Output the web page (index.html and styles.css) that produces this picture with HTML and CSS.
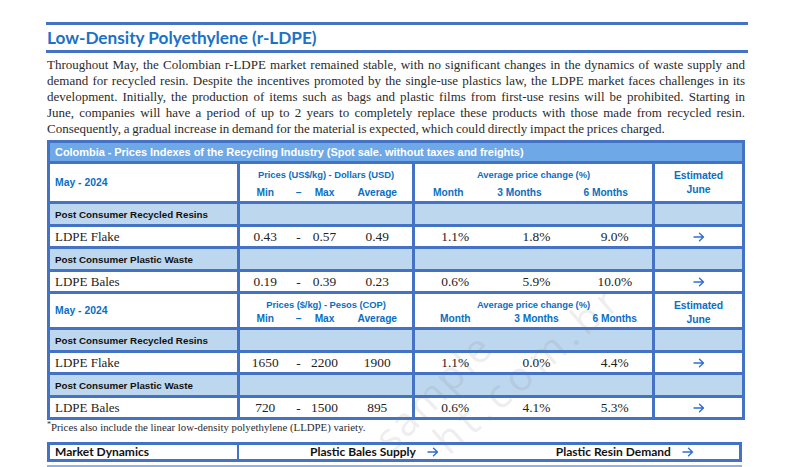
FILE: index.html
```html
<!DOCTYPE html>
<html>
<head>
<meta charset="utf-8">
<link rel="stylesheet" href="styles.css">
</head>
<body>
<div class="page">
  <h1 class="title">Low-Density Polyethylene (r-LDPE)</h1>
  <p class="intro">
    <span class="ln">Throughout May, the Colombian r-LDPE market remained stable, with no significant changes in the dynamics of waste supply and</span>
    <span class="ln">demand for recycled resin. Despite the incentives promoted by the single-use plastics law, the LDPE market faces challenges in its</span>
    <span class="ln">development. Initially, the production of items such as bags and plastic films from first-use resins will be prohibited. Starting in</span>
    <span class="ln">June, companies will have a period of up to 2 years to completely replace these products with those made from recycled resin.</span>
    <span class="ln last">Consequently, a gradual increase in demand for the material is expected, which could directly impact the prices charged.</span>
  </p>

  <table class="prices">
    <colgroup>
      <col class="c-label">
      <col class="c-min">
      <col class="c-dash">
      <col class="c-max">
      <col class="c-avg">
      <col class="c-month">
      <col class="c-3m">
      <col class="c-6m">
      <col class="c-est">
    </colgroup>
    <tr class="caption-row">
      <td colspan="9">Colombia - Prices Indexes of the Recycling Industry (Spot sale. without taxes and freights)</td>
    </tr>

    <tr class="head-top rule tall">
      <td class="period" rowspan="2">May - 2024</td>
      <td class="g hd" colspan="4">Prices (US$/kg) - Dollars (USD)</td>
      <td class="g hd" colspan="3">Average price change (%)</td>
      <td class="g hd est" rowspan="2">Estimated<br>June</td>
    </tr>
    <tr class="head-sub tall">
      <td class="g hd">Min</td><td class="hd">–</td><td class="hd">Max</td><td class="hd">Average</td>
      <td class="g hd sh1">Month</td><td class="hd sh3">3 Months</td><td class="hd sh6">6 Months</td>
    </tr>
    <tr class="cat rule">
      <td>Post Consumer Recycled Resins</td><td class="g" colspan="4"></td><td class="g" colspan="3"></td><td class="g"></td>
    </tr>
    <tr class="data rule">
      <td class="name">LDPE Flake</td>
      <td class="g">0.43</td><td>-</td><td>0.57</td><td>0.49</td>
      <td class="g">1.1%</td><td>1.8%</td><td>9.0%</td>
      <td class="g"><svg class="arrow" viewBox="0 0 12 10" width="12" height="10"><path d="M1 5H10.5M6.5 1.2L10.5 5L6.5 8.8"/></svg></td>
    </tr>
    <tr class="cat rule">
      <td>Post Consumer Plastic Waste</td><td class="g" colspan="4"></td><td class="g" colspan="3"></td><td class="g"></td>
    </tr>
    <tr class="data rule">
      <td class="name">LDPE Bales</td>
      <td class="g">0.19</td><td>-</td><td>0.39</td><td>0.23</td>
      <td class="g">0.6%</td><td>5.9%</td><td>10.0%</td>
      <td class="g"><svg class="arrow" viewBox="0 0 12 10" width="12" height="10"><path d="M1 5H10.5M6.5 1.2L10.5 5L6.5 8.8"/></svg></td>
    </tr>

    <tr class="head-top rule short">
      <td class="period" rowspan="2">May - 2024</td>
      <td class="g hd" colspan="4">Prices ($/kg) - Pesos (COP)</td>
      <td class="g hd" colspan="3">Average price change (%)</td>
      <td class="g hd est" rowspan="2">Estimated<br>June</td>
    </tr>
    <tr class="head-sub short">
      <td class="g hd">Min</td><td class="hd">–</td><td class="hd">Max</td><td class="hd">Average</td>
      <td class="g hd">Month</td><td class="hd">3 Months</td><td class="hd">6 Months</td>
    </tr>
    <tr class="cat rule">
      <td>Post Consumer Recycled Resins</td><td class="g" colspan="4"></td><td class="g" colspan="3"></td><td class="g"></td>
    </tr>
    <tr class="data rule">
      <td class="name">LDPE Flake</td>
      <td class="g">1650</td><td>-</td><td>2200</td><td>1900</td>
      <td class="g">1.1%</td><td>0.0%</td><td>4.4%</td>
      <td class="g"><svg class="arrow" viewBox="0 0 12 10" width="12" height="10"><path d="M1 5H10.5M6.5 1.2L10.5 5L6.5 8.8"/></svg></td>
    </tr>
    <tr class="cat rule">
      <td>Post Consumer Plastic Waste</td><td class="g" colspan="4"></td><td class="g" colspan="3"></td><td class="g"></td>
    </tr>
    <tr class="data rule">
      <td class="name">LDPE Bales</td>
      <td class="g">720</td><td>-</td><td>1500</td><td>895</td>
      <td class="g">0.6%</td><td>4.1%</td><td>5.3%</td>
      <td class="g"><svg class="arrow" viewBox="0 0 12 10" width="12" height="10"><path d="M1 5H10.5M6.5 1.2L10.5 5L6.5 8.8"/></svg></td>
    </tr>
  </table>

  <p class="note"><span class="star">*</span>Prices also include the linear low-density polyethylene (LLDPE) variety.</p>

  <div class="dynamics">
    <div class="dyn-label">Market Dynamics</div>
    <div class="dyn-items">
      <span class="dyn-item supply">Plastic Bales Supply <svg class="arrow" viewBox="0 0 12 10" width="12" height="10"><path d="M1 5H10.5M6.5 1.2L10.5 5L6.5 8.8"/></svg></span>
      <span class="dyn-item demand">Plastic Resin Demand <svg class="arrow" viewBox="0 0 12 10" width="12" height="10"><path d="M1 5H10.5M6.5 1.2L10.5 5L6.5 8.8"/></svg></span>
    </div>
  </div>
  <div class="next-rule"></div>

  <div class="watermark" aria-hidden="true">
    <span class="wm wm1">sample</span>
    <span class="wm wm2">ht.com.br</span>
  </div>
</div>
</body>
</html>
```

FILE: styles.css
```css
html, body {
  margin: 0;
  padding: 0;
  background: #ffffff;
}

.page {
  position: relative;
  width: 702px;
  padding: 22px 0 0 46px;
  overflow: hidden;
  height: 445px;
}

.title {
  margin: 0;
  height: 25px;
  border-top: 3px solid #4472c4;
  border-bottom: 3px solid #4472c4;
  padding-left: 1px;
  font-family: Lato, "Liberation Sans", sans-serif;
  font-weight: 700;
  font-size: 17.2px;
  line-height: 26px;
  color: #1b72c6;
}

.intro {
  margin: 4px 0 0 1px;
  width: 698px;
  font-family: "Liberation Serif", serif;
  font-size: 13px;
  line-height: 16px;
  color: #2a2a2a;
}

.intro .ln {
  display: block;
  text-align: justify;
  text-align-last: justify;
  white-space: nowrap;
}

.intro .ln.last {
  text-align-last: left;
  word-spacing: -0.5px;
}

/* table */
.prices {
  margin: 3px 0 0 1px;
  width: 697px;
  table-layout: fixed;
  border-collapse: collapse;
  border: 3px solid #4472c4;
  font-family: "Liberation Serif", serif;
  font-size: 13.4px;
  color: #222;
}

.c-label { width: 190px; }
.c-min { width: 52px; }
.c-dash { width: 16px; }
.c-max { width: 36px; }
.c-avg { width: 71px; }
.c-month { width: 82px; }
.c-3m { width: 82px; }
.c-6m { width: 76px; }
.c-est { width: 90px; }

.prices td {
  padding: 0;
  text-align: center;
  vertical-align: middle;
  white-space: nowrap;
}

.prices td.g {
  border-left: 3px solid #4472c4;
}

.prices tr.rule td {
  border-top: 3px solid #4472c4;
}

.caption-row td {
  height: 18px;
  background: #6ea8e6;
  color: #ffffff;
  text-align: left;
  padding-left: 5px;
  font-family: "Liberation Sans", Arial, sans-serif;
  font-weight: 700;
  font-size: 11px;
  letter-spacing: -0.05px;
}

.period {
  text-align: left !important;
  padding-left: 5px !important;
  font-family: "Liberation Sans", Arial, sans-serif;
  font-weight: 700;
  font-size: 10.4px;
  color: #0a6fc2;
}

.hd {
  font-family: "Liberation Sans", Arial, sans-serif;
  font-weight: 700;
  font-size: 9.4px;
  color: #0a6fc2;
  letter-spacing: -0.05px;
}

.head-sub .hd {
  font-size: 10.2px;
}

.hd.est {
  font-size: 10.4px;
  line-height: 14px;
}

.head-top.tall td { height: 18px; }
.head-sub.tall td { height: 18px; }
.head-top.short td { height: 16px; }
.head-sub.short td { height: 17px; }

.head-top.tall td.hd { vertical-align: middle; padding-top: 1px; }
.head-top.short td.hd { vertical-align: bottom; }
.head-sub td.hd { vertical-align: middle; }

.sh1 { padding-right: 14px !important; }
.sh3 { padding-right: 34px !important; }
.sh6 { padding-right: 18px !important; }

.cat td {
  height: 20px;
  background: #bdd7ee;
}

.cat td:first-child {
  text-align: left;
  padding-left: 5px;
  font-family: "Liberation Sans", Arial, sans-serif;
  font-weight: 700;
  font-size: 9.8px;
  color: #111;
}

.data td {
  height: 19px;
  background: #ffffff;
}

.data td.name {
  text-align: left;
  padding-left: 5px;
  font-size: 13px;
}

.arrow {
  display: inline-block;
  vertical-align: middle;
}

.arrow path {
  fill: none;
  stroke: #2f6fd3;
  stroke-width: 1.4;
  stroke-linecap: round;
  stroke-linejoin: round;
}

.note {
  margin: 1px 0 0 1px;
  font-family: "Liberation Serif", serif;
  font-size: 10.8px;
  line-height: 13px;
  color: #2a2a2a;
}

.note .star {
  font-size: 8px;
  line-height: 8px;
  vertical-align: top;
}

.dynamics {
  margin: 8px 0 0 1px;
  width: 689px;
  display: flex;
  border: 3px solid #4472c4;
  font-family: Lato, "Liberation Sans", sans-serif;
  font-weight: 700;
  font-size: 12px;
  line-height: 14px;
  color: #111;
}

.dyn-label {
  width: 182px;
  padding-left: 5px;
  border-right: 2px solid #4472c4;
}

.dyn-items {
  display: flex;
  align-items: center;
}

.dyn-item {
  display: inline-flex;
  align-items: center;
  gap: 11px;
}

.supply { margin-left: 71px; }
.demand { margin-left: 117px; }

.next-rule {
  margin: 3px 0 0 1px;
  width: 695px;
  border-top: 2px solid #8db4e2;
}

.watermark {
  position: absolute;
  left: 0;
  top: 0;
  width: 793px;
  height: 467px;
  pointer-events: none;
}

.wm {
  position: absolute;
  transform-origin: 0 100%;
  transform: rotate(-45deg);
  font-family: "Open Sans", sans-serif;
  font-weight: 400;
  font-size: 40px;
  line-height: 40px;
  color: rgba(120, 120, 120, 0.15);
  white-space: nowrap;
}

.wm1 { left: 395px; top: 418px; letter-spacing: 2px; }
.wm2 { left: 452px; top: 420px; letter-spacing: 6px; transform: rotate(-41deg); }
```
